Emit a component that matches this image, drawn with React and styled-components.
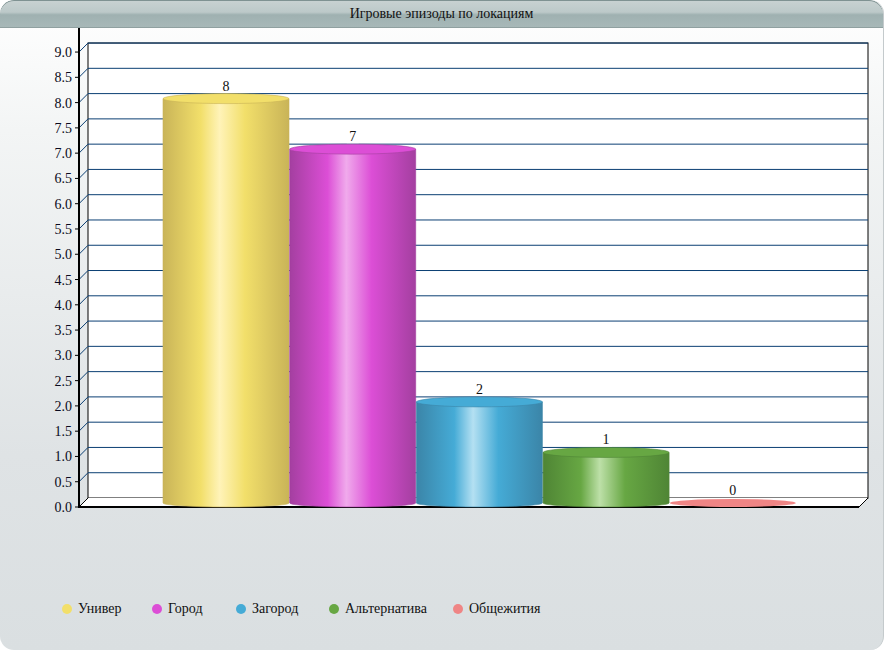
import React from 'react';
import styled, { createGlobalStyle } from 'styled-components';

const Global = createGlobalStyle`
  html, body { margin: 0; padding: 0; background: #fff; }
  body { font-family: "Liberation Serif", "Times New Roman", serif; }
`;

const Frame = styled.div`
  width: 884px;
  height: 650px;
  box-sizing: border-box;
  border-radius: 14px;
  overflow: hidden;
  display: flex;
  flex-direction: column;
  background: linear-gradient(180deg, #ffffff 0%, #f3f5f5 20%, #dfe3e5 70%, #dadfe1 100%);
  border-right: 1px solid #c4cacc;
`;

const TitleBar = styled.div`
  height: 27px;
  flex: none;
  display: flex;
  align-items: center;
  justify-content: center;
  font-size: 14px;
  color: #111;
  border-radius: 14px 14px 0 0;
  background: linear-gradient(180deg, #c9d2d2 0%, #bcc9c9 45%, #9fb1b1 55%, #a7b8b8 100%);
  border-bottom: 1px solid #8fa0a0;
  box-shadow: inset 0 1px 0 #7f9292;
`;

const Chart = styled.svg`
  display: block;
  flex: none;
`;

const Legend = styled.div`
  display: flex;
  align-items: center;
  padding: 76px 0 0 62px;
  font-size: 14px;
  color: #111;
`;

const LegendItem = styled.div`
  display: flex;
  align-items: center;
  gap: 6px;
  width: ${p => p.w}px;
`;

const Dot = styled.span`
  width: 10px;
  height: 10px;
  border-radius: 50%;
  background: ${p => p.c};
`;

const data = [
  { name: 'Универ', v: 8, c: '#f2df6a', d: '#c9b458', l: '#fff3b8', w: 90 },
  { name: 'Город', v: 7, c: '#dc4ed6', d: '#a43fa0', l: '#f0aaec', w: 84 },
  { name: 'Загород', v: 2, c: '#45abd6', d: '#3b85a8', l: '#b4e0f2', w: 93 },
  { name: 'Альтернатива', v: 1, c: '#67a743', d: '#4f8535', l: '#bde0a8', w: 124 },
  { name: 'Общежития', v: 0, c: '#ef8585', d: '#c86a6a', l: '#f8c4c4', w: 100 },
];

const X0 = 79, Y0 = 480, DX = 9, UNIT = 50.55;

export default function App() {
  const ticks = Array.from({ length: 19 }, (_, i) => i * 0.5);
  return (
    <>
      <Global />
      <Frame>
        <TitleBar>Игровые эпизоды по локациям</TitleBar>
        <Chart width="884" height="497" viewBox="0 28 884 497">
          <defs>
            {data.map((d, i) => (
              <linearGradient key={i} id={`g${i}`} x1="0" x2="1" y1="0" y2="0">
                <stop offset="0" stopColor={d.d} />
                <stop offset="0.3" stopColor={d.c} />
                <stop offset="0.45" stopColor={d.l} />
                <stop offset="0.65" stopColor={d.c} />
                <stop offset="1" stopColor={d.d} />
              </linearGradient>
            ))}
          </defs>
          <g transform="translate(0,27)">
            <rect x={X0 + DX} y={16} width={780} height={455} fill="#fff" stroke="#000" />
            <polygon points={`${X0},${Y0} ${X0 + DX},${Y0 - DX} ${868},${Y0 - DX} ${859},${Y0}`} fill="#fff" />
            {ticks.map(t => {
              const y = Y0 - t * UNIT;
              return (
                <g key={t}>
                  {t > 0 && <line x1={X0 + DX} x2={868} y1={y - DX} y2={y - DX} stroke="#0b3f73" />}
                  <line x1={X0} x2={X0 + DX} y1={y} y2={y - DX} stroke={t === 0 ? '#000' : '#0b3f73'} />
                  <line x1={X0 - 4} x2={X0} y1={y} y2={y} stroke="#000" />
                  <text x={X0 - 7} y={y + 5} textAnchor="end" fontSize="14" fill="#0a0a20" fontFamily="Liberation Serif, serif">{t.toFixed(1)}</text>
                </g>
              );
            })}
            <line x1={X0} x2={X0} y1={Y0 - 18 * UNIT} y2={Y0 + 1} stroke="#000" strokeWidth="2" />
            <line x1={X0} x2={859} y1={Y0} y2={Y0} stroke="#000" strokeWidth="2" />
            <line x1={859} x2={868} y1={Y0} y2={Y0 - DX} stroke="#000" />
            {data.map((d, i) => {
              const x = 163 + i * 126.7, w = 126;
              const base = Y0 - 4, top = base - d.v * UNIT;
              return (
                <g key={i}>
                  {d.v > 0 && (
                    <>
                      <path d={`M${x},${top} L${x},${base} A${w / 2},4 0 0 0 ${x + w},${base} L${x + w},${top} Z`} fill={`url(#g${i})`} stroke={d.d} strokeWidth="0.6" />
                      <ellipse cx={x + w / 2} cy={top} rx={w / 2} ry={5} fill={d.c} stroke={d.d} strokeWidth="0.6" />
                    </>
                  )}
                  {d.v === 0 && <ellipse cx={x + w / 2} cy={base} rx={w / 2} ry={4} fill={d.c} />}
                  <rect x={x + w / 2 - 6} y={top - 20} width={12} height={14} fill="#fff" />
                  <text x={x + w / 2} y={top - 8} textAnchor="middle" fontSize="14" fill="#111" fontFamily="Liberation Serif, serif">{d.v}</text>
                </g>
              );
            })}
          </g>
        </Chart>
        <Legend>
          {data.map(d => (
            <LegendItem key={d.name} w={d.w}><Dot c={d.c} />{d.name}</LegendItem>
          ))}
        </Legend>
      </Frame>
    </>
  );
}
